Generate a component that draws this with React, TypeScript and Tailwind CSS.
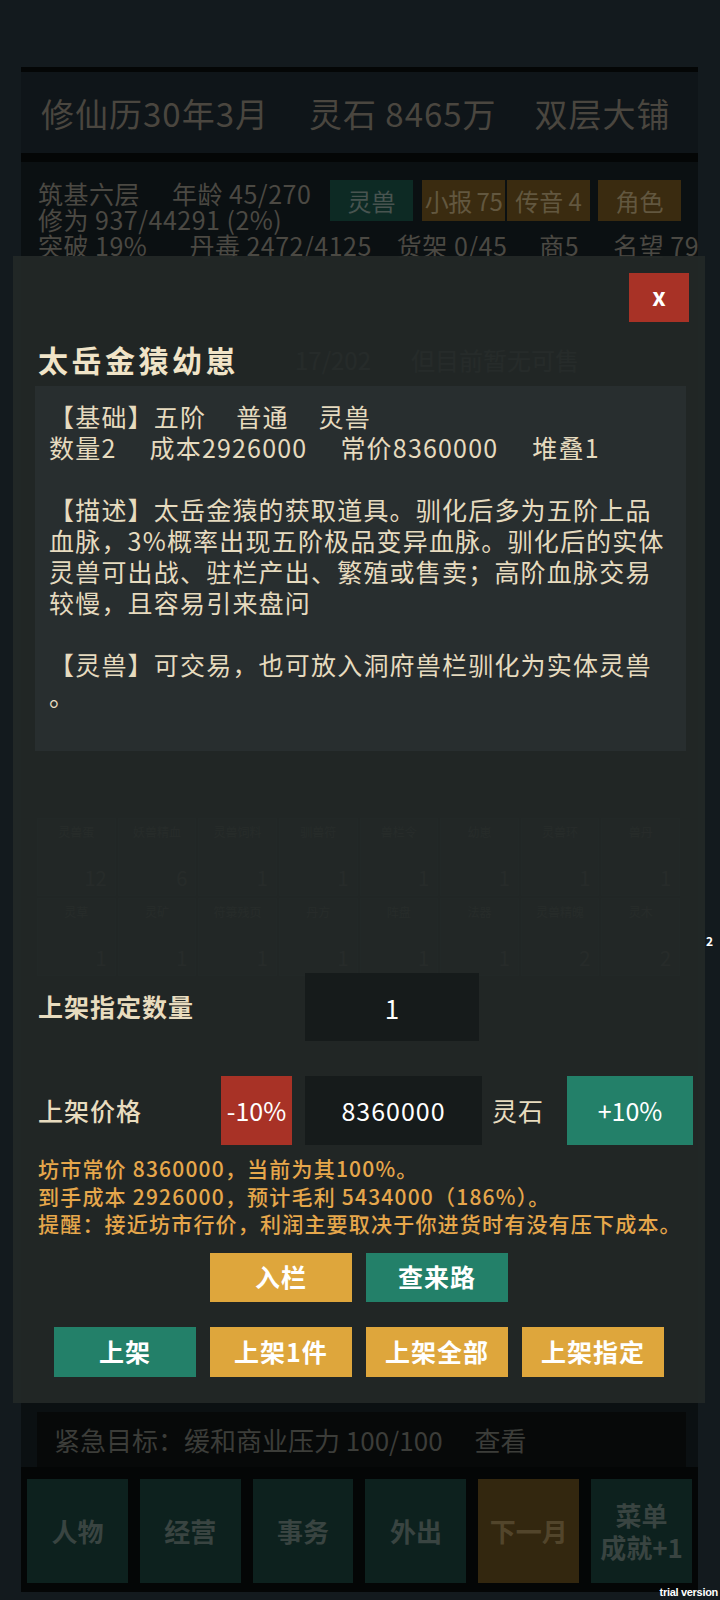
import React from "react";

const font = "font-['Noto_Sans_CJK_SC','Noto_Sans',sans-serif]";

function GridCell({ label, num }: { label: string; num: string }) {
  return (
    <div className="h-[78px] border border-[#2e3533] bg-[#1a201f] flex flex-col items-center justify-between px-[4px] py-[6px]">
      <div className="text-[12px] leading-[14px] text-[#8f8a7a] text-center w-full">{label}</div>
      <div className="text-[20px] leading-[22px] text-[#8f8a7a] self-end pr-[4px]">{num}</div>
    </div>
  );
}

export default function App() {
  const row1 = [
    ["灵兽蛋", "12"],
    ["妖兽精血", "6"],
    ["灵兽饲料", "1"],
    ["驯兽符", "1"],
    ["兽栏令", "1"],
    ["幼崽", "1"],
    ["灵兽环", "1"],
    ["兽丹", "1"],
  ];
  const row2 = [
    ["灵草", "1"],
    ["灵矿", "1"],
    ["符箓残页", "1"],
    ["丹方", "1"],
    ["阵盘", "1"],
    ["法器", "1"],
    ["灵兽精魄", "2"],
    ["灵木", "2"],
  ];

  return (
    <div className={`relative w-[720px] h-[1600px] overflow-hidden bg-[#131a1e] ${font}`}>
      {/* background page (dimmed) */}
      <div className="h-full pt-[67px] pb-[8px] pl-[21px] pr-[22px] flex flex-col">
        <div className="flex-1 flex flex-col bg-[#0b1012]">
          {/* header */}
          <div className="h-[95px] border-t-[5px] border-b-[9px] border-[#040606] bg-[#0f1519] flex items-center pl-[20px] text-[33px] leading-[40px] tracking-[1px] text-[#4a463f] whitespace-nowrap">
            <span>修仙历30年3月</span>
            <span className="ml-[40px]">灵石 8465万</span>
            <span className="ml-[38px]">双层大铺</span>
          </div>
          {/* status */}
          <div className="pl-[17px] pt-[18px] text-[25px] leading-[26px] tracking-[0.5px] text-[#4b4943] whitespace-nowrap">
            <div className="flex items-start">
              <div className="w-[292px] shrink-0">
                <div>
                  <span>筑基六层</span>
                  <span className="ml-[32px]">年龄 45/270</span>
                </div>
                <div>修为 937/44291 (2%)</div>
              </div>
              <div className="flex text-[24px] tracking-normal">
                <div className="shrink-0 w-[83px] h-[41px] bg-[#0d2a24] text-[#485450] flex items-center justify-center">灵兽</div>
                <div className="shrink-0 ml-[9px] w-[83px] h-[41px] bg-[#3a2b10] text-[#62573f] flex items-center justify-center tracking-[-0.5px]">小报 75</div>
                <div className="shrink-0 ml-[2px] w-[83px] h-[41px] bg-[#3a2b10] text-[#62573f] flex items-center justify-center">传音 4</div>
                <div className="shrink-0 ml-[8px] w-[83px] h-[41px] bg-[#3a2b10] text-[#62573f] flex items-center justify-center">角色</div>
              </div>
            </div>
            <div>
              <span>突破 19%</span>
              <span className="ml-[42px]">丹毒 2472/4125</span>
              <span className="ml-[25px]">货架 0/45</span>
              <span className="ml-[32px]">商5</span>
              <span className="ml-[34px]">名望 79</span>
            </div>
          </div>
          {/* middle content (hidden under modal) */}
          <div className="flex-1 pl-[16px] pr-[18px]">
            <div className="mt-[89px] text-[24px] leading-[26px] text-[#85827a] whitespace-nowrap pl-[258px]">
              <span>17/202</span>
              <span className="ml-[40px]">但目前暂无可售</span>
            </div>
            <div className="mt-[445px] grid grid-cols-8 gap-[2px]">
              {row1.map(([l, n], i) => (
                <GridCell key={"a" + i} label={l} num={n} />
              ))}
              {row2.map(([l, n], i) => (
                <GridCell key={"b" + i} label={l} num={n} />
              ))}
            </div>
          </div>
          {/* urgent */}
          <div className="pl-[16px] pr-[12px] pt-[9px]">
            <div className="h-[55px] bg-[#070909] flex items-center pl-[17px] text-[26px] text-[#3c3d39] whitespace-nowrap">
              <span>紧急目标：缓和商业压力 100/100</span>
              <span className="ml-[32px]">查看</span>
            </div>
          </div>
          {/* nav */}
          <div className="h-[125px] bg-[#040606] px-[6px] pt-[12px] pb-[9px] flex gap-[12px] text-[26px] font-bold leading-[32px]">
            {["人物", "经营", "事务", "外出"].map((t) => (
              <div key={t} className="flex-1 bg-[#0d211e] text-[#394441] flex items-center justify-center">
                {t}
              </div>
            ))}
            <div className="flex-1 bg-[#33270f] text-[#52452b] flex items-center justify-center">下一月</div>
            <div className="flex-1 bg-[#0d211e] text-[#394441] flex flex-col items-center justify-center">
              <span>菜单</span>
              <span>成就+1</span>
            </div>
          </div>
        </div>
      </div>

      {/* modal */}
      <div className="absolute left-[13px] top-[256px] w-[692px] h-[1147px] bg-[#222827]/[0.96] px-[22px] pt-[17px]">
        <div className="flex justify-end -mr-[6px]">
          <button className="w-[60px] h-[49px] bg-[#a83226] text-white text-[24px] font-bold flex items-center justify-center leading-none pb-[3px]">
            x
          </button>
        </div>
        <div className="mt-[19px] ml-[3px] text-[30px] leading-[36px] font-bold tracking-[3.5px] text-[#f0e4c8] whitespace-nowrap">
          太岳金猿幼崽
        </div>
        <div className="mt-[9px] w-[651px] h-[365px] bg-[#282e2f] pt-[15px] pl-[14px] text-[25px] leading-[31px] tracking-[1.2px] text-[#e6dbbf] whitespace-nowrap">
          <div>
            <span>【基础】五阶</span>
            <span className="ml-[30px]">普通</span>
            <span className="ml-[30px]">灵兽</span>
          </div>
          <div>
            <span>数量2</span>
            <span className="ml-[33px]">成本2926000</span>
            <span className="ml-[33px]">常价8360000</span>
            <span className="ml-[34px]">堆叠1</span>
          </div>
          <div className="h-[31px]" />
          <div>【描述】太岳金猿的获取道具。驯化后多为五阶上品</div>
          <div>血脉，3%概率出现五阶极品变异血脉。驯化后的实体</div>
          <div>灵兽可出战、驻栏产出、繁殖或售卖；高阶血脉交易</div>
          <div>较慢，且容易引来盘问</div>
          <div className="h-[31px]" />
          <div>【灵兽】可交易，也可放入洞府兽栏驯化为实体灵兽</div>
          <div>。</div>
        </div>

        {/* quantity row */}
        <div className="mt-[222px] flex items-center h-[68px]">
          <div className="shrink-0 w-[270px] pl-[3px] text-[25px] font-bold tracking-[1px] text-[#e8dcbf] whitespace-nowrap">
            上架指定数量
          </div>
          <div className="shrink-0 w-[174px] h-[68px] bg-[#161b1b] text-white text-[26px] flex items-center justify-center">
            1
          </div>
        </div>

        {/* price row */}
        <div className="mt-[35px] flex items-center h-[69px]">
          <div className="shrink-0 w-[186px] pl-[3px] text-[25px] font-medium tracking-[1px] text-[#e8dcbf] whitespace-nowrap">
            上架价格
          </div>
          <div className="shrink-0 w-[71px] h-[69px] bg-[#a83226] text-white text-[25px] flex items-center justify-center">
            -10%
          </div>
          <div className="shrink-0 ml-[13px] w-[177px] h-[69px] bg-[#161b1b] text-white text-[25px] tracking-[1px] flex items-center justify-center">
            8360000
          </div>
          <div className="shrink-0 ml-[10px] w-[52px] text-[25px] tracking-[1px] text-[#e8dcbf] whitespace-nowrap">灵石</div>
          <div className="shrink-0 ml-[23px] w-[126px] h-[69px] bg-[#238069] text-white text-[25px] flex items-center justify-center">
            +10%
          </div>
        </div>

        {/* info */}
        <div className="mt-[10px] ml-[3px] text-[21px] leading-[27.5px] tracking-[1.2px] font-medium text-[#e6a74b] whitespace-nowrap">
          <div>坊市常价 8360000，当前为其100%。</div>
          <div>到手成本 2926000，预计毛利 5434000（186%）。</div>
          <div>提醒：接近坊市行价，利润主要取决于你进货时有没有压下成本。</div>
        </div>

        {/* buttons */}
        <div className="mt-[15px] flex justify-center gap-[14px] text-[25px] tracking-[1px] font-bold text-white">
          <div className="w-[142px] h-[49px] bg-[#dea63c] flex items-center justify-center">入栏</div>
          <div className="w-[142px] h-[49px] bg-[#238069] flex items-center justify-center">查来路</div>
        </div>
        <div className="mt-[25px] flex justify-center gap-[14px] text-[25px] tracking-[1px] font-bold text-white">
          <div className="w-[142px] h-[50px] bg-[#238069] flex items-center justify-center">上架</div>
          <div className="w-[142px] h-[50px] bg-[#dea63c] flex items-center justify-center">上架1件</div>
          <div className="w-[142px] h-[50px] bg-[#dea63c] flex items-center justify-center">上架全部</div>
          <div className="w-[142px] h-[50px] bg-[#dea63c] flex items-center justify-center">上架指定</div>
        </div>
      </div>

      {/* stray badge */}
      <div className="absolute left-[706px] top-[935px] text-[12px] font-bold text-white leading-none">2</div>
      <div className="absolute right-[2px] bottom-[1px] text-[11px] font-bold text-white leading-[14px] font-['Liberation_Sans',sans-serif] tracking-[-0.3px]">
        trial version
      </div>
    </div>
  );
}
